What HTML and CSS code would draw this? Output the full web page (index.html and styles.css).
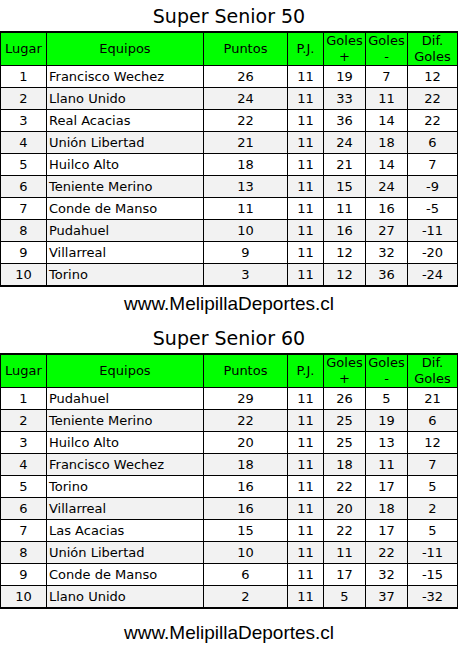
FILE: index.html
```html
<!DOCTYPE html>
<html>
<head>
<meta charset="utf-8">
<link rel="stylesheet" href="styles.css">
</head>
<body>
<div class="page">
  <h1 class="title">Super Senior 50</h1>
  <table class="standings">
    <colgroup>
      <col class="c-lugar"><col class="c-equipo"><col class="c-puntos"><col class="c-pj"><col class="c-gf"><col class="c-gc"><col class="c-dif">
    </colgroup>
    <thead>
      <tr><th>Lugar</th><th>Equipos</th><th>Puntos</th><th>P.J.</th><th>Goles<br>+</th><th>Goles<br>-</th><th>Dif.<br>Goles</th></tr>
    </thead>
    <tbody>
      <tr><td>1</td><td class="team">Francisco Wechez</td><td>26</td><td>11</td><td>19</td><td>7</td><td>12</td></tr>
      <tr><td>2</td><td class="team">Llano Unido</td><td>24</td><td>11</td><td>33</td><td>11</td><td>22</td></tr>
      <tr><td>3</td><td class="team">Real Acacias</td><td>22</td><td>11</td><td>36</td><td>14</td><td>22</td></tr>
      <tr><td>4</td><td class="team">Unión Libertad</td><td>21</td><td>11</td><td>24</td><td>18</td><td>6</td></tr>
      <tr><td>5</td><td class="team">Huilco Alto</td><td>18</td><td>11</td><td>21</td><td>14</td><td>7</td></tr>
      <tr><td>6</td><td class="team">Teniente Merino</td><td>13</td><td>11</td><td>15</td><td>24</td><td>-9</td></tr>
      <tr><td>7</td><td class="team">Conde de Manso</td><td>11</td><td>11</td><td>11</td><td>16</td><td>-5</td></tr>
      <tr><td>8</td><td class="team">Pudahuel</td><td>10</td><td>11</td><td>16</td><td>27</td><td>-11</td></tr>
      <tr><td>9</td><td class="team">Villarreal</td><td>9</td><td>11</td><td>12</td><td>32</td><td>-20</td></tr>
      <tr><td>10</td><td class="team">Torino</td><td>3</td><td>11</td><td>12</td><td>36</td><td>-24</td></tr>
    </tbody>
  </table>
  <p class="site">www.MelipillaDeportes.cl</p>
  <h1 class="title">Super Senior 60</h1>
  <table class="standings">
    <colgroup>
      <col class="c-lugar"><col class="c-equipo"><col class="c-puntos"><col class="c-pj"><col class="c-gf"><col class="c-gc"><col class="c-dif">
    </colgroup>
    <thead>
      <tr><th>Lugar</th><th>Equipos</th><th>Puntos</th><th>P.J.</th><th>Goles<br>+</th><th>Goles<br>-</th><th>Dif.<br>Goles</th></tr>
    </thead>
    <tbody>
      <tr><td>1</td><td class="team">Pudahuel</td><td>29</td><td>11</td><td>26</td><td>5</td><td>21</td></tr>
      <tr><td>2</td><td class="team">Teniente Merino</td><td>22</td><td>11</td><td>25</td><td>19</td><td>6</td></tr>
      <tr><td>3</td><td class="team">Huilco Alto</td><td>20</td><td>11</td><td>25</td><td>13</td><td>12</td></tr>
      <tr><td>4</td><td class="team">Francisco Wechez</td><td>18</td><td>11</td><td>18</td><td>11</td><td>7</td></tr>
      <tr><td>5</td><td class="team">Torino</td><td>16</td><td>11</td><td>22</td><td>17</td><td>5</td></tr>
      <tr><td>6</td><td class="team">Villarreal</td><td>16</td><td>11</td><td>20</td><td>18</td><td>2</td></tr>
      <tr><td>7</td><td class="team">Las Acacias</td><td>15</td><td>11</td><td>22</td><td>17</td><td>5</td></tr>
      <tr><td>8</td><td class="team">Unión Libertad</td><td>10</td><td>11</td><td>11</td><td>22</td><td>-11</td></tr>
      <tr><td>9</td><td class="team">Conde de Manso</td><td>6</td><td>11</td><td>17</td><td>32</td><td>-15</td></tr>
      <tr><td>10</td><td class="team">Llano Unido</td><td>2</td><td>11</td><td>5</td><td>37</td><td>-32</td></tr>
    </tbody>
  </table>
  <p class="site site-last">www.MelipillaDeportes.cl</p>
</div>
</body>
</html>
```

FILE: styles.css
```css
html, body {
  margin: 0;
  padding: 0;
  background: #ffffff;
}
.page {
  width: 458px;
  font-family: "DejaVu Sans", Verdana, sans-serif;
  color: #000;
}
.title {
  margin: 0;
  height: 31px;
  line-height: 33px;
  font-size: 19px;
  font-weight: normal;
  text-align: center;
}
.standings {
  border-collapse: collapse;
  width: 457px;
  margin-left: 0;
  table-layout: fixed;
  border-top: 2px solid #000;
  border-bottom: 2px solid #000;
  border-left: 1px solid #000;
  border-right: 1px solid #000;
  font-size: 13px;
}
.c-lugar { width: 46px; }
.c-equipo { width: 157px; }
.c-puntos { width: 84px; }
.c-pj { width: 36px; }
.c-gf { width: 42px; }
.c-gc { width: 42px; }
.c-dif { width: 50px; }
.standings th, .standings td {
  border: 1px solid #000;
  padding: 0;
  text-align: center;
  vertical-align: middle;
  font-weight: normal;
}
.standings th {
  background: #00ff00;
  height: 32px;
  line-height: 16px;
}
.standings td {
  height: 21px;
  line-height: 21px;
}
.standings td.team {
  text-align: left;
  padding-left: 2px;
}
.standings tbody tr:nth-child(even) td {
  background: #f2f2f2;
}
.site {
  margin: 0;
  height: 35px;
  line-height: 34px;
  text-align: center;
  font-family: "Liberation Sans", Arial, sans-serif;
  font-size: 19px;
}
.site-last {
  line-height: 48px;
}
```
